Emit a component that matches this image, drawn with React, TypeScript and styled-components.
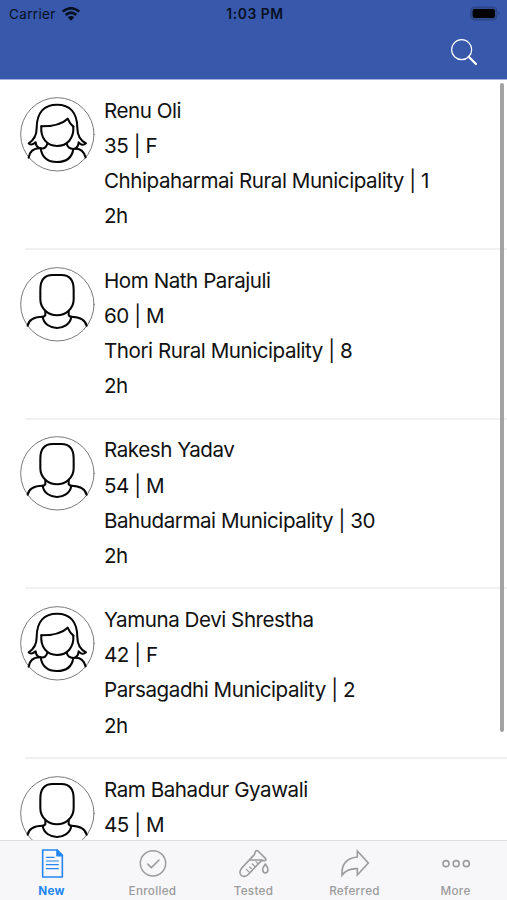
import React from "react";
import styled, { createGlobalStyle } from "styled-components";

const GlobalStyle = createGlobalStyle`
  * { box-sizing: border-box; }
  html, body { margin: 0; padding: 0; overflow: hidden; }
  body { font-family: Inter, "Liberation Sans", sans-serif; background: #fff; }
`;

const Screen = styled.div`
  position: relative;
  display: flex;
  flex-direction: column;
  width: 507px;
  height: 900px;
  overflow: hidden;
  background: #fff;
`;

const Header = styled.header`
  flex: none;
  height: 80px;
  background: #3858ac;
  border-bottom: 1px solid #9fb0da;
`;

const StatusBar = styled.div`
  display: grid;
  grid-template-columns: 1fr auto 1fr;
  align-items: center;
  height: 27px;
  padding: 0 6px 0 9px;
  color: #06101f;
`;

const Carrier = styled.div`
  display: flex;
  align-items: center;
  gap: 6px;
  font-size: 13.5px;
  letter-spacing: 0.35px;
`;

const Clock = styled.div`
  font-size: 13.8px;
  font-weight: 600;
  letter-spacing: 0.6px;
`;

const BatterySlot = styled.div`
  display: flex;
  justify-content: flex-end;
`;

const NavBar = styled.div`
  display: flex;
  justify-content: flex-end;
  padding: 11px 29px 0 0;
`;

const List = styled.main`
  flex: 1;
  min-height: 0;
  overflow: hidden;
`;

const Row = styled.article`
  display: flex;
  height: 169.8px;
  padding: 12.9px 0 0 20px;
`;

const Divider = styled.div`
  height: 2px;
  margin: -2px 0 0 25px;
  background: #f1f1f1;
`;

const Portrait = styled.svg`
  flex: none;
  width: 75px;
  height: 75px;
  margin: 4px 9px 0 0;
`;

const Details = styled.div`
  display: flex;
  flex-direction: column;
  color: #111;
  font-size: 20.6px;
  line-height: 35.1px;
  letter-spacing: -0.46px;
  white-space: nowrap;
`;

const ScrollThumb = styled.div`
  position: absolute;
  top: 83px;
  right: 3px;
  width: 4px;
  height: 649px;
  border-radius: 2px;
  background: #a3a3a3;
`;

const TabBar = styled.nav`
  flex: none;
  display: grid;
  grid-template-columns: repeat(5, 1fr);
  height: 60px;
  padding: 0 1px;
  border-top: 1px solid #dcdcdd;
  background: #f7f6f8;
`;

const Tab = styled.div<{ $active?: boolean }>`
  display: flex;
  flex-direction: column;
  align-items: center;
  padding-top: 7px;
  color: ${(p) => (p.$active ? "#2487f5" : "#9b9b9c")};
`;

const TabIcon = styled.svg`
  width: 30px;
  height: 30px;
  fill: none;
  stroke: currentColor;
  stroke-width: 4.8;
  stroke-linejoin: round;
  stroke-linecap: round;
`;

const TabLabel = styled.span<{ $active?: boolean }>`
  margin-top: 6px;
  font-size: 11.7px;
  line-height: 14px;
  font-weight: ${(p) => (p.$active ? 700 : 500)};
  letter-spacing: 0.3px;
`;

function WifiIcon() {
  return (
    <svg width="18" height="14" viewBox="0 0 54 42" fill="none" stroke="currentColor" strokeWidth="7.5">
      <path d="M2 14Q27-7 52 14" />
      <path d="M11 24Q27 10 43 24" />
      <path d="M27 41L17 31Q27 23 37 31Z" fill="currentColor" stroke="none" />
    </svg>
  );
}

function BatteryIcon() {
  return (
    <svg width="31" height="15" viewBox="0 0 93 45">
      <rect x="2" y="3" width="79" height="39" rx="12" fill="#304b8f" stroke="#2b4588" strokeWidth="3" />
      <rect x="8" y="9" width="67" height="27" rx="7" fill="#000" />
      <path d="M85 16Q92 22 85 29Z" fill="#2b4588" />
    </svg>
  );
}

function SearchIcon() {
  return (
    <svg width="28" height="28" viewBox="0 0 84 84" fill="none" stroke="#fff">
      <circle cx="35" cy="35" r="30" strokeWidth="3.6" />
      <path d="M56 56L78 78" strokeWidth="6.5" strokeLinecap="round" />
    </svg>
  );
}

function Avatar({ sex }: { sex: string }) {
  return (
    <Portrait viewBox="30 19 225 225" fill="none" stroke="#050505" strokeWidth="6.2" strokeLinejoin="round" strokeLinecap="round">
      <circle cx="142" cy="131" r="110" stroke="#6f6f6f" strokeWidth="2.8" />
      {sex === "F" ? (
        <>
          <path d="M112 159Q107 176 92 173Q78 171 77 155Q66 166 56 158Q80 143 80 112C80 64 104 42 141 42C178 42 202 64 202 112Q202 145 228 158Q217 168 206 155Q204 173 190 175Q173 174 170 159" />
          <path d="M94 107Q150 107 173 84Q180 100 190 108" />
          <path d="M94 107C91 141 110 166 141 166C172 166 192 143 190 108" />
          <path d="M56 201Q61 171 92 173Q98 214 141 214Q184 214 190 175Q218 170 227 200" />
        </>
      ) : (
        <>
          <path d="M91 87Q91 43 128 43H154Q191 43 191 87V116C191 145 166 164 141 164C116 164 91 145 91 116Z" />
          <path d="M106 150V163Q104 168 98 168Q57 169 53 195M176 150V163Q178 168 184 168Q224 169 230 195" />
          <path d="M98 168C103 212 178 214 184 168" />
        </>
      )}
    </Portrait>
  );
}

const patients = [
  { name: "Renu Oli", age: 35, sex: "F", place: "Chhipaharmai Rural Municipality | 1" },
  { name: "Hom Nath Parajuli", age: 60, sex: "M", place: "Thori Rural Municipality | 8" },
  { name: "Rakesh Yadav", age: 54, sex: "M", place: "Bahudarmai Municipality | 30" },
  { name: "Yamuna Devi Shrestha", age: 42, sex: "F", place: "Parsagadhi Municipality | 2" },
  { name: "Ram Bahadur Gyawali", age: 45, sex: "M", place: "" },
];

export default function App() {
  return (
    <Screen>
      <GlobalStyle />
      <Header>
        <StatusBar>
          <Carrier>
            Carrier
            <WifiIcon />
          </Carrier>
          <Clock>1:03 PM</Clock>
          <BatterySlot>
            <BatteryIcon />
          </BatterySlot>
        </StatusBar>
        <NavBar>
          <SearchIcon />
        </NavBar>
      </Header>
      <List>
        {patients.map((p) => (
          <React.Fragment key={p.name}>
            <Row>
              <Avatar sex={p.sex} />
              <Details>
                <div>{p.name}</div>
                <div>
                  {p.age} | {p.sex}
                </div>
                {p.place && <div>{p.place}</div>}
                {p.place && <div>2h</div>}
              </Details>
            </Row>
            <Divider />
          </React.Fragment>
        ))}
      </List>
      <ScrollThumb />
      <TabBar>
        <Tab $active>
          <TabIcon viewBox="109 39 90 90">
            <path d="M126 45H169L185 61V126H126Z" />
            <path d="M169 45V62H185Z" fill="currentColor" />
            <path d="M137 67H160M137 78H173M137 89H173M137 101H173" strokeWidth="3.3" />
          </TabIcon>
          <TabLabel $active>New</TabLabel>
        </Tab>
        <Tab>
          <TabIcon viewBox="413 39 90 90">
            <circle cx="458" cy="85" r="38" strokeWidth="4.4" />
            <path d="M442 87L453 98L476 75" />
          </TabIcon>
          <TabLabel>Enrolled</TabLabel>
        </Tab>
        <Tab>
          <TabIcon viewBox="115 39 90 90">
            <path d="M164 50Q167 45 172 48L195 71Q198 77 190 77H182L145 116C127 136 107 115 125 97L161 59Z" />
            <path d="M148 75H184M137 103L144 110M147 96L152 101M155 87L163 95M166 80L171 85" strokeWidth="3.8" />
            <path d="M194 87Q186 98 186 104Q187 114 194 114Q201 114 202 104Q202 98 194 87Z" />
          </TabIcon>
          <TabLabel>Tested</TabLabel>
        </Tab>
        <Tab>
          <TabIcon viewBox="419 39 90 90">
            <path d="M471 48L504 84L471 120V101Q440 100 425 121Q422 71 471 66Z" strokeLinejoin="miter" />
          </TabIcon>
          <TabLabel>Referred</TabLabel>
        </Tab>
        <Tab>
          <TabIcon viewBox="722 39 90 90">
            <circle cx="737" cy="86" r="9" />
            <circle cx="767.5" cy="86" r="9" />
            <circle cx="798" cy="86" r="9" />
          </TabIcon>
          <TabLabel>More</TabLabel>
        </Tab>
      </TabBar>
    </Screen>
  );
}
